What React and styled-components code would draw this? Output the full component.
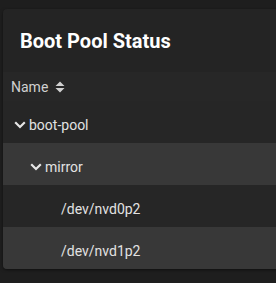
import React from "react";
import styled, {createGlobalStyle} from "styled-components";

const GlobalStyle = createGlobalStyle`
  html, body {
    margin: 0;
    padding: 0;
    background: #1e1e1e;
    overflow: hidden;
    font-family: Roboto, "Liberation Sans", sans-serif;
  }
`;

const rows = [
    {name: "boot-pool", level: 0, expandable: true},
    {name: "mirror", level: 1, expandable: true},
    {name: "/dev/nvd0p2", level: 2},
    {name: "/dev/nvd1p2", level: 2},
];

export default function App() {
    return (
        <Page>
            <GlobalStyle/>
            <Card>
                <Title>Boot Pool Status</Title>
                <HeaderRow>
                    Name
                    <SortIcon viewBox="0 0 10 12">
                        <path d="M5 0.5 L9.5 5 H0.5 Z M5 11.5 L0.5 7 H9.5 Z" fill="#cfcfcf"/>
                    </SortIcon>
                </HeaderRow>
                {rows.map((row, i) => (
                    <Row key={row.name} $striped={i % 2 === 1} $level={row.level}>
                        <Toggle>
                            {row.expandable && (
                                <svg width="12" height="8" viewBox="0 0 12 8">
                                    <path d="M1.2 1.3 L6 6 L10.8 1.3" fill="none" stroke="#e6e6e6" strokeWidth="2.2"/>
                                </svg>
                            )}
                        </Toggle>
                        <Label>{row.name}</Label>
                    </Row>
                ))}
            </Card>
        </Page>
    );
}

const Page = styled.div`
  padding: 9px 0 0 3px;
  height: 283px;
  box-sizing: border-box;
`;

const Card = styled.div`
  width: 300px;
  background: #242424;
  border-radius: 4px;
  overflow: hidden;
  box-shadow: 0 1px 3px rgba(0, 0, 0, 0.5);
`;

const Title = styled.h3`
  margin: 0;
  height: 63px;
  box-sizing: border-box;
  padding: 20px 0 0 17px;
  font-size: 20px;
  line-height: 24px;
  font-weight: 700;
  color: #ffffff;
`;

const HeaderRow = styled.div`
  display: flex;
  align-items: center;
  height: 29px;
  padding: 0 0 0 8px;
  background: #272727;
  font-size: 14px;
  color: #d0d0d0;
`;

const SortIcon = styled.svg`
  width: 10px;
  height: 12px;
  margin-left: 7px;
`;

const Row = styled.div`
  display: flex;
  align-items: center;
  height: 42px;
  box-sizing: border-box;
  padding-top: 5px;
  padding-left: ${p => 10 + p.$level * 16}px;
  background: ${p => (p.$striped ? "#383838" : "#262626")};
`;

const Toggle = styled.span`
  display: inline-flex;
  align-items: center;
  justify-content: center;
  width: 14px;
  margin-right: 2px;
`;

const Label = styled.span`
  font-size: 14px;
  color: #e2e2e2;
`;
